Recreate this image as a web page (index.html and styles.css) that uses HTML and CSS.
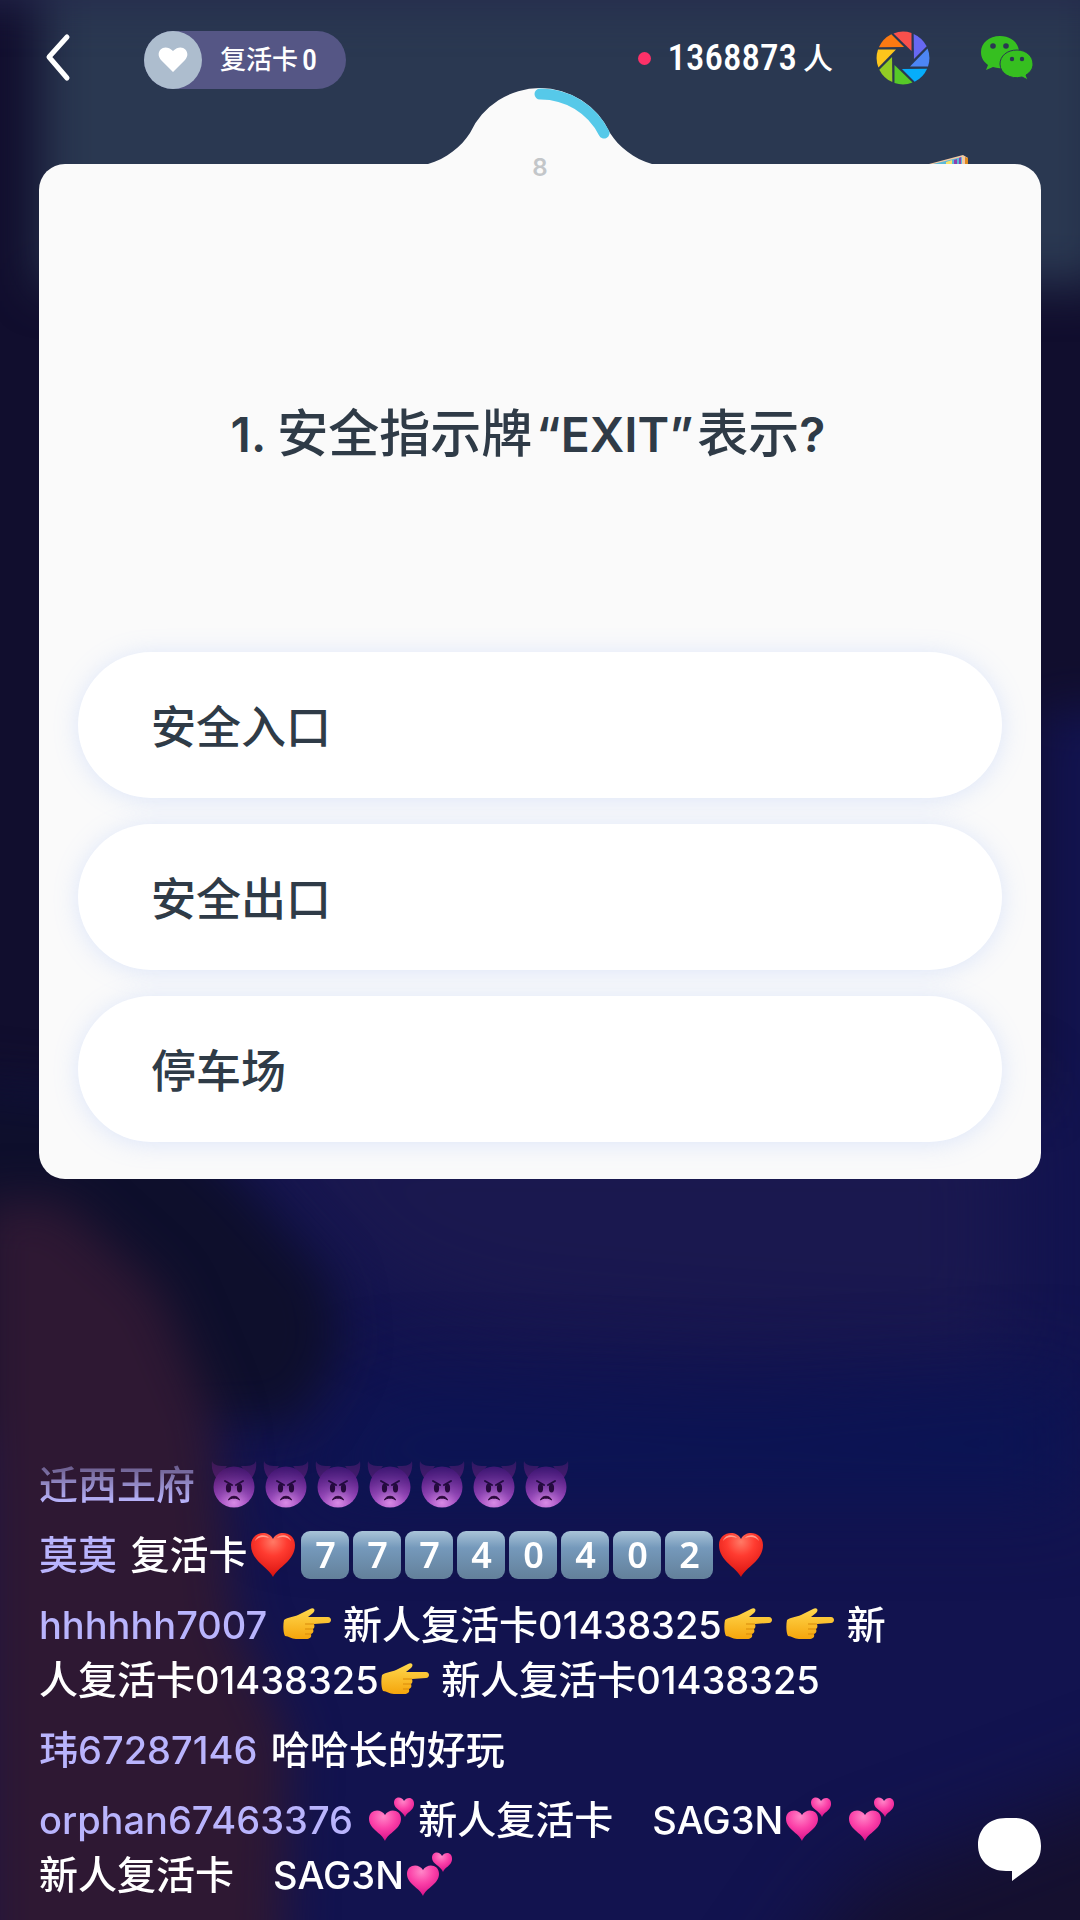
FILE: index.html
```html
<!DOCTYPE html>
<html lang="zh-CN">
<head>
<meta charset="utf-8">
<meta name="viewport" content="width=device-width, initial-scale=1">
<title>答题直播</title>
<link rel="stylesheet" href="styles.css">
</head>
<body>
<svg class="backdrop" viewBox="0 0 1080 1920" preserveAspectRatio="none" aria-hidden="true">
  <defs>
    <filter id="soft" filterUnits="userSpaceOnUse" x="-300" y="-300" width="1700" height="2600" color-interpolation-filters="sRGB"><feGaussianBlur stdDeviation="24"/></filter>
    <filter id="softer" filterUnits="userSpaceOnUse" x="-300" y="-300" width="1700" height="2600" color-interpolation-filters="sRGB"><feGaussianBlur stdDeviation="42"/></filter>
  </defs>
  <rect width="1080" height="1920" fill="#12134f"/>
  <path d="M-200 -200H1300V710H1040V1100H-200z" fill="#110e2e" filter="url(#soft)"/>
  <path d="M40 -100H1110V285H40z" fill="#2a3851" filter="url(#soft)"/>
  <path d="M-100 -80H1180V0H-100z" fill="#24284c" filter="url(#soft)"/>
  <path d="M200 1100H1010V1360L760 1350 500 1330 380 1290z" fill="#1a184f" filter="url(#softer)"/>
  <path d="M380 1390L760 1400 1080 1380V1500H280z" fill="#0b1454" filter="url(#softer)"/>
  <path d="M-200 1060L150 1100 240 1180 330 1280 340 1350 300 1420 -200 1440z" fill="#0e0f2c" filter="url(#soft)"/>
  <path d="M-20 1200L60 1200 160 1290 215 1420 235 1620 290 1740 280 2060H-20z" fill="#2e1833" filter="url(#soft)"/>
  <path d="M720 2080L860 1880 1000 1830 1240 1740V2080z" fill="#15102f" filter="url(#softer)"/>
</svg>

<svg class="symbols" aria-hidden="true">
  <defs>
    <radialGradient id="devil-face" cx=".5" cy=".88" r=".85"><stop offset="0" stop-color="#d88be6"/><stop offset=".45" stop-color="#a04cc0"/><stop offset="1" stop-color="#7a1f9c"/></radialGradient>
    <radialGradient id="heart-red" cx=".5" cy=".2" r=".8"><stop offset="0" stop-color="#ff7a66"/><stop offset=".4" stop-color="#ff3b30"/><stop offset="1" stop-color="#d8120f"/></radialGradient>
    <linearGradient id="hand-skin" x2="0" y2="1"><stop offset="0" stop-color="#ffd84e"/><stop offset="1" stop-color="#f5a50c"/></linearGradient>
    <radialGradient id="heart-pink" cx=".45" cy=".2" r=".85"><stop offset="0" stop-color="#ff86c8"/><stop offset=".45" stop-color="#fb41a8"/><stop offset="1" stop-color="#d60a86"/></radialGradient>
    <symbol id="devil" viewBox="0 0 48 48">
      <path d="M2 1C4 6 10 6 17 6L7 19C3 14 1 8 2 1zM46 1C44 6 38 6 31 6L41 19C45 14 47 8 46 1z" fill="#69217f"/>
      <circle cx="24" cy="27" r="20.500" fill="url(#devil-face)"/>
      <path d="M15 21L22 25M33 21L26 25" stroke="#2c0838" stroke-width="2" stroke-linecap="round" fill="none"/>
      <ellipse cx="18.500" cy="28" rx="2.600" ry="4.500" fill="#2c0838"/><ellipse cx="29.500" cy="28" rx="2.600" ry="4.500" fill="#2c0838"/>
      <path d="M18.500 40C20 35 28 35 29.500 40C27 37.500 21 37.500 18.500 40z" fill="#2c0838" stroke="#2c0838"/>
    </symbol>
    <symbol id="heart" viewBox="0 0 48 48">
      <path d="M24 47C19 37 2 31 2 15C2 2 19-1 24 9C29-1 46 2 46 15C46 31 29 37 24 47z" fill="url(#heart-red)"/>
      <path d="M6 11C8 4 17 4 20 8C14 6 9 7 6 11zM28 8C31 4 40 4 42 11C39 7 34 6 28 8z" fill="#ffb3a3" opacity=".8"/>
    </symbol>
    <symbol id="hand" viewBox="0 0 48 32">
      <path d="M1 12C5 9 10 9 15 7L27 1C31-1 33 2 30 5L25 9H45C49 9 49 15 45 15L31 16C32 19 31 20 30 21C31 24 30 25 28 26C29 30 26 31 22 31H13C8 31 6 28 2 28C0 24 0 17 1 12z" fill="url(#hand-skin)"/>
      <path d="M31 16H22M30 21H22M28 26H22" stroke="#d98a0b" stroke-width="1" fill="none"/>
    </symbol>
    <symbol id="two-hearts" viewBox="0 0 48 46">
      <path d="M17 45C14 37 1 33 1 23C1 13 13 12 17 19C21 12 33 13 33 23C33 33 20 37 17 45z" fill="url(#heart-pink)"/>
      <path d="M37 21C35 15 26 13 26 7C26 0 34 0 36 5C39 0 47 1 46 9C45 15 39 16 37 21z" fill="url(#heart-pink)"/>
    </symbol>
  </defs>
</svg>

<div class="app">
  <header class="topbar">
    <button class="icon-button back" type="button" aria-label="返回">
      <svg width="26" height="50" viewBox="0 0 26 50"><path d="M22 4L4 24 22 45" fill="none" stroke="#fff" stroke-width="5" stroke-linecap="round" stroke-linejoin="round"/></svg>
    </button>
    <div class="revive">
      <span class="revive-badge">
        <svg width="30" height="26" viewBox="0 0 30 26"><path d="M15 25L3 13C-4 5 6-5 15 4C24-5 34 5 27 13z" fill="#fff"/></svg>
      </span>
      <span class="revive-label">复活卡<span class="narrow revive-count">0</span></span>
    </div>
    <div class="viewers"><span class="live-dot"></span><span class="count narrow">1368873</span><span class="unit">人</span></div>
    <button class="icon-button moments" type="button" aria-label="朋友圈">
      <svg width="54" height="54" viewBox="-27 -27 54 54">
        <defs><path id="blade" d="M-9.500 -24.600A26.400 26.400 0 0 1 8.500 -25V-7z"/></defs>
        <use href="#blade" fill="#f9504c"/>
        <use href="#blade" fill="#6768f2" transform="rotate(45)"/>
        <use href="#blade" fill="#4d86f5" transform="rotate(90)"/>
        <use href="#blade" fill="#06adfb" transform="rotate(135)"/>
        <use href="#blade" fill="#56c928" transform="rotate(180)"/>
        <use href="#blade" fill="#92cc24" transform="rotate(225)"/>
        <use href="#blade" fill="#fdc51c" transform="rotate(270)"/>
        <use href="#blade" fill="#fb7a12" transform="rotate(315)"/>
      </svg>
    </button>
    <button class="icon-button wechat" type="button" aria-label="微信">
      <svg width="54" height="46" viewBox="0 0 54 46">
        <path d="M20 1C9 1 1 8 1 17C1 23 4 27 8 30L6 35 13 32C24 36 39 29 39 17C39 8 31 1 20 1z" fill="#36bf20"/>
        <path d="M37 15C27 15 20 21 20 29C20 38 30 45 42 42L48 45 46 40C51 37 53 33 53 29C53 21 46 15 37 15z" fill="#36bf20" stroke="#2a3851" stroke-width="1"/>
        <g fill="#2a3851"><circle cx="13" cy="11" r="2.800"/><circle cx="26" cy="11" r="2.800"/><circle cx="32" cy="24" r="2.200"/><circle cx="42" cy="24" r="2.200"/></g>
      </svg>
    </button>
  </header>

  <main class="card">
    <svg class="gift" width="40" height="10" viewBox="0 0 40 10" aria-hidden="true">
      <path d="M0 10L34 1 39 4V10H0z" fill="#f2c9a4"/><path d="M4 10L33 3V10H4z" fill="#5ab8d8"/><path d="M25 6L28 5V10H25z" fill="#8d3fae"/><path d="M17 8L23 6V10H17z" fill="#f6e36a"/><path d="M30 4L32 3V10H30z" fill="#8d3fae"/><path d="M36 3L39 4V10H36z" fill="#e08a1e"/>
    </svg>
    <div class="timer" role="timer">
      <svg width="224" height="78" viewBox="0 0 224 78" aria-hidden="true">
        <path d="M0 76C18 71 34 58 42 45A77 77 0 0 1 182 45C190 58 206 71 224 76V78H0z" fill="#fafafa"/>
        <path d="M112 6A71 71 0 0 1 176 45" fill="none" stroke="#56c9e9" stroke-width="11" stroke-linecap="round"/>
      </svg>
      <span class="seconds">8</span>
    </div>
    <h1 class="question"><span class="latin">1. </span>安全指示牌<span class="latin quoted">“EXIT”</span>表示<span class="latin">?</span></h1>
    <div class="options">
      <button class="option" type="button">安全入口</button>
      <button class="option" type="button">安全出口</button>
      <button class="option" type="button">停车场</button>
    </div>
  </main>

  <footer class="bottom">
    <ul class="chat">
      <li><span class="name">迁西王府</span> <svg class="emoji"><use href="#devil"/></svg><svg class="emoji"><use href="#devil"/></svg><svg class="emoji"><use href="#devil"/></svg><svg class="emoji"><use href="#devil"/></svg><svg class="emoji"><use href="#devil"/></svg><svg class="emoji"><use href="#devil"/></svg><svg class="emoji"><use href="#devil"/></svg></li>
      <li><span class="name">莫莫</span> 复活卡<svg class="emoji"><use href="#heart"/></svg><span class="keycap">7</span><span class="keycap">7</span><span class="keycap">7</span><span class="keycap">4</span><span class="keycap">0</span><span class="keycap">4</span><span class="keycap">0</span><span class="keycap">2</span><svg class="emoji"><use href="#heart"/></svg></li>
      <li><span class="name latin">hhhhhh7007</span> <svg class="emoji"><use href="#hand"/></svg> 新人复活卡<span class="latin">01438325</span><svg class="emoji"><use href="#hand"/></svg> <svg class="emoji"><use href="#hand"/></svg> 新人复活卡<span class="latin">01438325</span><svg class="emoji"><use href="#hand"/></svg> 新人复活卡<span class="latin">01438325</span></li>
      <li><span class="name">玮<span class="latin">67287146</span></span> 哈哈长的好玩</li>
      <li><span class="name latin">orphan67463376</span> <svg class="emoji"><use href="#two-hearts"/></svg>新人复活卡　<span class="latin">SAG3N</span><svg class="emoji"><use href="#two-hearts"/></svg> <svg class="emoji"><use href="#two-hearts"/></svg> 新人复活卡　<span class="latin">SAG3N</span><svg class="emoji"><use href="#two-hearts"/></svg></li>
    </ul>
    <button class="icon-button talk" type="button" aria-label="发言">
      <svg width="63" height="63" viewBox="0 0 63 63"><path d="M28 0H37C53 0 63 12 63 28C63 38 59 45 53 49L34 63V53H28C11 53 0 42 0 27C0 11 11 0 28 0z" fill="#fff"/></svg>
    </button>
  </footer>
</div>
</body>
</html>
```

FILE: styles.css
```css
* { box-sizing: border-box; }

body {
  margin: 0;
  background: #12134f;
  color: #fff;
  font-family: Inter, "Noto Sans CJK SC", sans-serif;
}

button { font: inherit; border: 0; cursor: pointer; }

.backdrop {
  position: absolute;
  inset: 0;
  width: 100%;
  height: 100%;
  z-index: -1;
}

.symbols { position: absolute; width: 0; height: 0; }

.app {
  min-height: 100vh;
  display: flex;
  flex-direction: column;
  padding: 0 39px;
}

.latin { line-height: 1; }

/* top bar */
.topbar {
  display: flex;
  align-items: center;
  height: 116px;
  margin-bottom: 48px;
  padding: 0 7px 0 6px;
}

.icon-button {
  display: block;
  padding: 0;
  background: none;
  line-height: 0;
}

.revive {
  display: flex;
  align-items: center;
  gap: 18px;
  height: 58px;
  margin: 4px auto 0 73px;
  padding-right: 29px;
  border-radius: 29px;
  background: #555685;
}

.revive-badge {
  display: grid;
  place-items: center;
  width: 58px;
  height: 58px;
  border-radius: 50%;
  background: #adbdce;
}

.revive-label {
  display: flex;
  align-items: center;
  gap: 4px;
  font-size: 26px;
  font-weight: 500;
  line-height: 36px;
}

.narrow { font-family: "Roboto Condensed", "Liberation Sans Narrow", Roboto, sans-serif; }

.revive-count { font-size: 30px; }

.viewers { display: flex; align-items: center; }

.live-dot {
  width: 13px;
  height: 13px;
  margin-right: 17px;
  border-radius: 50%;
  background: #fc3168;
}

.count { font-size: 37px; font-weight: 500; line-height: 46px; }
.unit { margin-left: 6px; font-size: 30px; font-weight: 500; line-height: 40px; }
.moments { margin-left: 43px; }
.wechat { margin-left: 50px; }

/* question card */
.card {
  position: relative;
  padding: 0 39px 37px;
  border-radius: 26px;
  background: #fafafa;
  color: #2f3b47;
}

.gift { position: absolute; right: 72px; bottom: 100%; }

.timer {
  position: absolute;
  left: 0;
  right: 0;
  top: -76px;
  display: flex;
  flex-direction: column;
  align-items: center;
}

.seconds {
  margin-top: -12px;
  color: #c3c6c9;
  font: 600 24px/28px Inter, sans-serif;
}

.question {
  margin: 0;
  padding: 235px 24px 183px 0;
  font-size: 51px;
  font-weight: 500;
  line-height: 70px;
  text-align: center;
}

.question .latin { font-size: 48px; font-weight: 600; }
.question .quoted { margin: 0 4px; }

.options { display: grid; gap: 26px; }

.option {
  height: 146px;
  padding: 0 73px 2px;
  border-radius: 73px;
  background: #fff;
  box-shadow: 0 2px 24px rgba(140, 175, 250, 0.26);
  color: #2f3b47;
  font-size: 45px;
  font-weight: 500;
  text-align: left;
}

/* live chat */
.bottom {
  display: flex;
  align-items: flex-end;
  justify-content: space-between;
  margin-top: auto;
  padding: 24px 0 18px;
}

.chat {
  display: grid;
  gap: 15px;
  width: 870px;
  margin: 0;
  padding: 0;
  list-style: none;
  font-size: 39px;
  font-weight: 500;
  line-height: 55px;
  -webkit-mask-image: linear-gradient(rgba(0, 0, 0, 0.3), #000 45px);
  mask-image: linear-gradient(rgba(0, 0, 0, 0.3), #000 45px);
}

.chat .latin { font-size: 38px; }

.name { margin-right: 3px; color: #b9b4fd; }

.emoji {
  width: 48px;
  height: 48px;
  margin: 0 2px;
  vertical-align: -9px;
}

.keycap {
  display: inline-block;
  width: 48px;
  height: 48px;
  margin: 4px 2px 0;
  border-radius: 9px;
  background: linear-gradient(#a9c4d8, #7599bb 35%, #63809a);
  font: 600 36px/48px "Noto Sans", sans-serif;
  text-align: center;
  vertical-align: top;
}

.talk { margin-bottom: 21px; }
```
